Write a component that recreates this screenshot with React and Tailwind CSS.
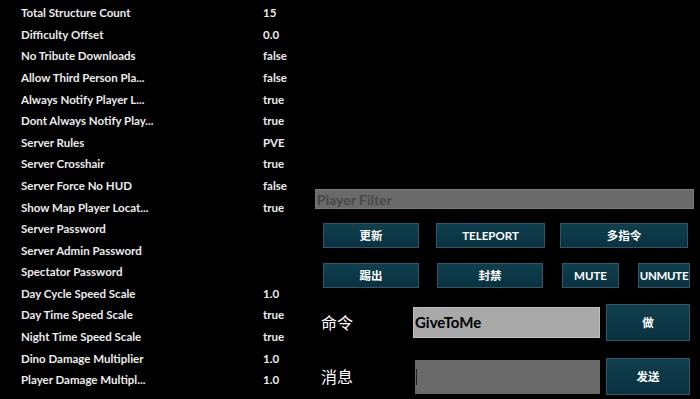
const rows = [
  ["Total Structure Count", "15"],
  ["Difficulty Offset", "0.0"],
  ["No Tribute Downloads", "false"],
  ["Allow Third Person Pla...", "false"],
  ["Always Notify Player L...", "true"],
  ["Dont Always Notify Play...", "true"],
  ["Server Rules", "PVE"],
  ["Server Crosshair", "true"],
  ["Server Force No HUD", "false"],
  ["Show Map Player Locat...", "true"],
  ["Server Password", ""],
  ["Server Admin Password", ""],
  ["Spectator Password", ""],
  ["Day Cycle Speed Scale", "1.0"],
  ["Day Time Speed Scale", "true"],
  ["Night Time Speed Scale", "true"],
  ["Dino Damage Multiplier", "1.0"],
  ["Player Damage Multipl...", "1.0"],
];

const font = { fontFamily: 'Lato, "Noto Sans CJK SC", sans-serif' };

function Btn({ children, className = "" }) {
  return (
    <div
      className={`flex items-center justify-center bg-gradient-to-b from-[#0f3f4e] to-[#0a3140] border border-[#2c5868] text-white text-[11.5px] font-bold ${className}`}
    >
      {children}
    </div>
  );
}

export default function App() {
  return (
    <div className="w-[700px] h-[399px] bg-black text-white flex overflow-hidden" style={font}>
      {/* settings list */}
      <div className="w-[315px] pt-[2px] pl-[21px]">
        {rows.map(([k, v]) => (
          <div key={k} className="h-[21.6px] flex items-center text-[11.5px] font-bold text-[#ececec]">
            <span className="w-[242px] truncate">{k}</span>
            <span>{v}</span>
          </div>
        ))}
      </div>

      {/* right panel */}
      <div className="flex-1 pt-[189px] pr-[6px] flex flex-col">
        <div className="h-[20px] bg-[#6a6a6a] border border-[#7a7a7a] flex items-center pl-[1px] text-[14px] font-bold text-[#484848]">
          Player Filter
        </div>

        <div className="flex mt-[14px] pl-[8px] h-[25px]">
          <Btn className="w-[96px]">更新</Btn>
          <Btn className="w-[109px] ml-[17px]">TELEPORT</Btn>
          <Btn className="w-[128px] ml-[15px]">多指令</Btn>
        </div>

        <div className="flex mt-[15px] pl-[8px] h-[25px]">
          <Btn className="w-[96px]">踢出</Btn>
          <Btn className="w-[106px] ml-[18px]">封禁</Btn>
          <Btn className="w-[57px] ml-[19px]">MUTE</Btn>
          <Btn className="w-[52px] ml-[19px] tracking-[-0.3px]">UNMUTE</Btn>
        </div>

        <div className="flex items-center mt-[16px] h-[37px]">
          <span className="w-[98px] pl-[6px] text-[16px]">命令</span>
          <div className="w-[187px] h-[31px] bg-[#a9a9a9] border border-[#c0c0c0] flex items-center pl-[1px] text-[15px] font-bold text-black">
            GiveToMe
          </div>
          <Btn className="w-[84px] h-[37px] ml-[6px]">做</Btn>
        </div>

        <div className="flex items-center mt-[17px] h-[37px]">
          <span className="w-[100px] pl-[6px] text-[16px]">消息</span>
          <div className="w-[185px] h-[34px] bg-[#6a6a6a] flex items-center pl-[1px]">
            <div className="w-[1px] h-[16px] bg-[#222]" />
          </div>
          <Btn className="w-[84px] h-[37px] ml-[6px]">发送</Btn>
        </div>
      </div>
    </div>
  );
}
